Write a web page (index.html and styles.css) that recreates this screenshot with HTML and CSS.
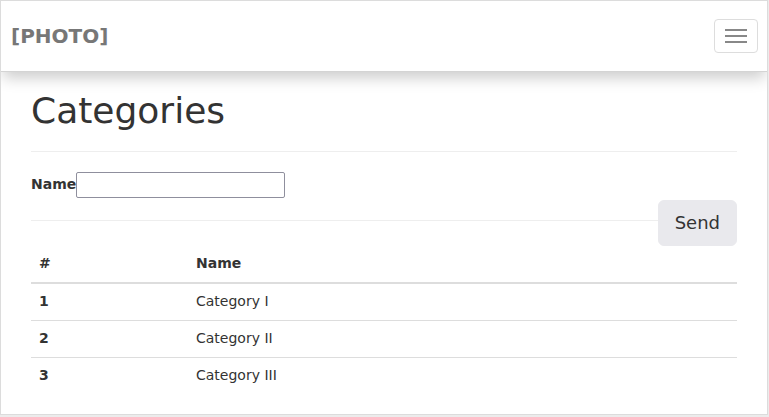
FILE: index.html
```html
<!DOCTYPE html>
<html lang="en">
<head>
<meta charset="utf-8">
<title>Categories</title>
<link rel="stylesheet" href="styles.css">
</head>
<body>
<div class="frame">
  <nav class="navbar">
    <span class="brand">[PHOTO]</span>
    <button class="toggler" type="button" aria-label="Toggle navigation">
      <span class="bar"></span><span class="bar"></span><span class="bar"></span>
    </button>
  </nav>
  <main class="content">
    <h1 class="title">Categories</h1>
    <hr class="rule">
    <form class="form">
      <div class="field">
        <label class="label" for="name">Name</label>
        <input class="input" id="name" type="text">
      </div>
      <div class="actions">
        <hr class="rule rule-actions">
        <button class="send" type="button">Send</button>
      </div>
    </form>
    <table class="table">
      <thead>
        <tr><th class="col-id">#</th><th>Name</th></tr>
      </thead>
      <tbody>
        <tr><th>1</th><td>Category I</td></tr>
        <tr><th>2</th><td>Category II</td></tr>
        <tr><th>3</th><td>Category III</td></tr>
      </tbody>
    </table>
  </main>
</div>
</body>
</html>
```

FILE: styles.css
```css
* { box-sizing: border-box; }
html, body { margin: 0; padding: 0; }
body {
  background: #ececec;
  font-family: "DejaVu Sans", "Liberation Sans", sans-serif;
  font-size: 14px;
  line-height: 20px;
  color: #333;
}
.frame {
  width: 768px;
  height: 415px;
  border: 1px solid #dcdcdc;
  background: #fff;
  overflow: hidden;
}
.navbar {
  position: relative;
  z-index: 1;
  height: 71px;
  display: flex;
  align-items: center;
  justify-content: space-between;
  padding: 0 9px 1px 10px;
  border-bottom: 1px solid #d4d4d4;
  background: #fff;
  box-shadow: 0 8px 14px -2px rgba(0,0,0,0.2);
}
.brand {
  font-weight: bold;
  font-size: 20px;
  color: #777;
  line-height: 24px;
  margin-top: 1px;
}
.toggler {
  width: 44px;
  height: 34px;
  border: 1px solid #ddd;
  border-radius: 4px;
  background: #fff;
  padding: 9px 10px;
  display: flex;
  flex-direction: column;
  gap: 4px;
}
.bar {
  display: block;
  width: 22px;
  height: 2px;
  background: #888;
}
.content {
  padding: 0 30px;
}
.title {
  font-size: 36px;
  line-height: 40px;
  font-weight: normal;
  margin: 19px 0 20px;
  color: #333;
}
.rule {
  border: 0;
  border-top: 1px solid #eee;
  margin: 0 0 20px;
  height: 0;
}
.form { margin: 0; }
.field {
  display: flex;
  align-items: center;
  height: 26px;
  margin-bottom: 2px;
}
.label {
  font-weight: bold;
  margin-top: -2px;
}
.input {
  width: 209px;
  height: 26px;
  border: 1px solid #8f8f9d;
  border-radius: 2px;
  padding: 2px 4px;
  font: inherit;
}
.actions {
  display: flex;
  align-items: flex-start;
}
.rule-actions {
  flex: 1;
  margin: 20px 0 0;
}
.send {
  font-family: inherit;
  font-size: 18px;
  line-height: 24px;
  padding: 10px 16px;
  border: 1px solid #e9e9ed;
  border-radius: 6px;
  background: #e9e9ed;
  color: #333;
}
.table {
  width: 100%;
  border-collapse: collapse;
  margin-top: 0;
}
.table th, .table td {
  text-align: left;
  padding: 7px 8px 9px;
  line-height: 20px;
  vertical-align: top;
}
.table thead th {
  border-bottom: 2px solid #ddd;
}
.table tbody tr + tr th, .table tbody tr + tr td {
  border-top: 1px solid #ddd;
}
.col-id { width: 157px; }
```
